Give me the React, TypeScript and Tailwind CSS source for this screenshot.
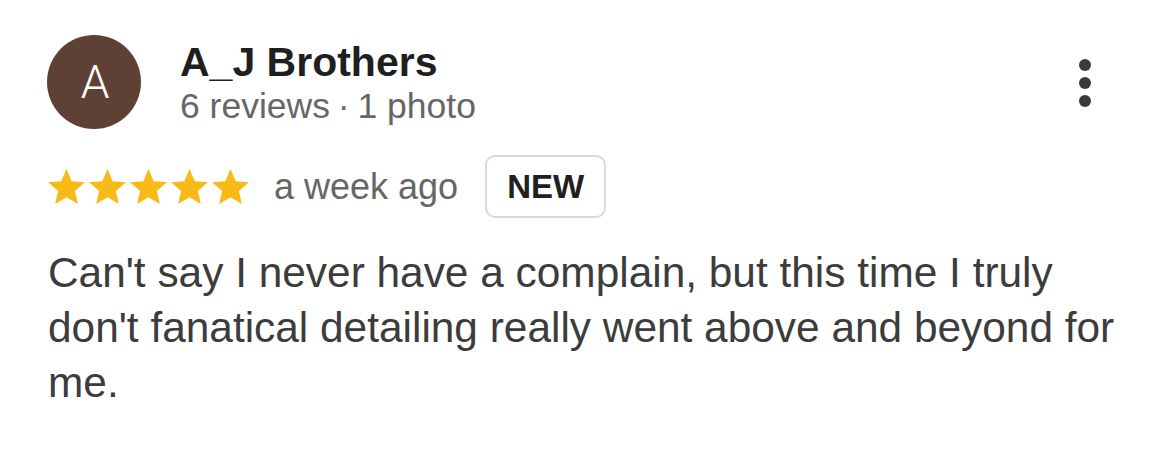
import React from "react";

const Star = () => (
  <svg width="37" height="35" viewBox="2 2 20 19" className="block">
    <path
      d="M12 17.27L18.18 21l-1.64-7.03L22 9.24l-7.19-.61L12 2 9.19 8.63 2 9.24l5.46 4.73L5.82 21z"
      fill="#f7ba16"
    />
  </svg>
);

export default function App() {
  return (
    <div className="w-[1170px] h-[468px] bg-white overflow-hidden font-['Liberation_Sans',Arial,sans-serif]">
      <div className="pl-[47px] pr-[79px] pt-[35px]">
        <div className="flex items-start">
          <div className="w-[94px] h-[94px] rounded-full bg-[#5e4035] text-white text-[46px] font-['Roboto',sans-serif] font-light leading-none flex items-center justify-center shrink-0 pl-[2px]">
            A
          </div>
          <div className="ml-[39px] pt-[4px]">
            <div className="text-[41px] font-bold leading-[47px] text-[#1f1f1f]">A_J Brothers</div>
            <div className="text-[35.5px] leading-[40px] text-[#666666] whitespace-nowrap">
              6 reviews<span className="mx-[-2px]"> · </span>1 photo
            </div>
          </div>
          <div className="ml-auto mt-[24px] flex flex-col gap-[6px]">
            <div className="w-[12px] h-[12px] rounded-full bg-[#3a3a3a]" />
            <div className="w-[12px] h-[12px] rounded-full bg-[#3a3a3a]" />
            <div className="w-[12px] h-[12px] rounded-full bg-[#3a3a3a]" />
          </div>
        </div>
        <div className="flex items-center mt-[26px] pl-[1px]">
          <div className="flex gap-[4px]">
            <Star />
            <Star />
            <Star />
            <Star />
            <Star />
          </div>
          <span className="ml-[25px] text-[36px] text-[#666666] leading-none">a week ago</span>
          <span className="ml-[27px] h-[63px] px-[20px] border-2 border-[#dadada] rounded-[10px] flex items-center text-[33px] font-bold text-[#202020]">
            NEW
          </span>
        </div>
        <p className="mt-[27px] pl-[1px] text-[42.4px] leading-[55px] text-[#3c3c3c] whitespace-nowrap">
          Can't say I never have a complain, but this time I truly
          <br />
          don't fanatical detailing really went above and beyond for
          <br />
          me.
        </p>
      </div>
    </div>
  );
}
